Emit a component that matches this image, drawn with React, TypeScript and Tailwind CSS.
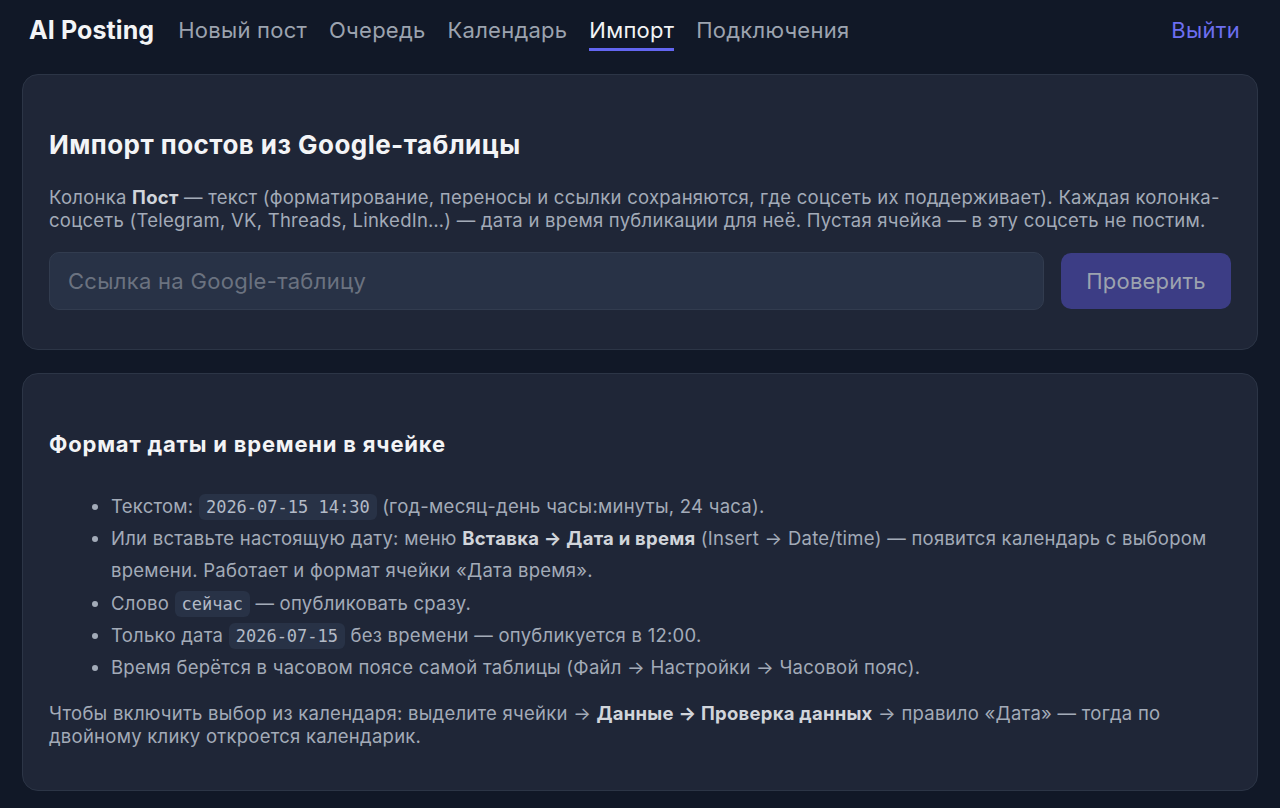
import React from "react";

const Code = ({ children }: { children: React.ReactNode }) => (
  <code className="rounded-md bg-[#283246] px-[7px] py-[3px] text-[17px] leading-[20px] tracking-normal text-[#b3bac6] [font-family:'DejaVu_Sans_Mono',monospace]">
    {children}
  </code>
);

export default function App() {
  const nav = ["Новый пост", "Очередь", "Календарь", "Импорт", "Подключения"];
  return (
    <div className="min-h-[808px] bg-[#111827] text-[#e5e7eb] [font-family:Inter,'Noto_Sans',sans-serif]">
      <header className="flex items-center justify-between pl-[29px] pr-[40px] pt-[16px]">
        <div className="flex items-start gap-[22px]">
          <div className="mr-[2px] text-[25px] font-bold leading-[28px] tracking-[0.1px] text-[#f3f4f6]">AI Posting</div>
          {nav.map((n) => (
            <div
              key={n}
              className={
                n === "Импорт"
                  ? "border-b-[3px] border-[#6366f1] pb-[4px] text-[22px] leading-[28px] tracking-[0.25px] text-[#f3f4f6]"
                  : "border-b-[3px] border-transparent pb-[4px] text-[22px] leading-[28px] tracking-[0.25px] text-[#9ca3af]"
              }
            >
              {n}
            </div>
          ))}
        </div>
        <div className="self-start text-[22px] leading-[28px] tracking-[0.3px] text-[#6d6ff0]">Выйти</div>
      </header>

      <main className="flex flex-col gap-[23px] px-[22px] pt-[23px] pb-[18px]">
        <section className="rounded-[16px] border border-[#2c3546] bg-[#1f2637] px-[26px] pt-[54px] pb-[39px]">
          <h2 className="text-[26px] font-bold leading-[32px] tracking-[0.45px] text-[#f3f4f6]">Импорт постов из Google-таблицы</h2>
          <p className="mt-[25px] text-[18.5px] leading-[23px] tracking-[0.25px] text-[#a3abb8]">
            Колонка <b className="font-bold text-[#d1d5db]">Пост</b> — текст (форматирование, переносы и ссылки сохраняются, где соцсеть их поддерживает). Каждая колонка-соцсеть (Telegram, VK, Threads, LinkedIn…) — дата и время публикации для неё. Пустая ячейка — в эту соцсеть не постим.
          </p>
          <div className="mt-[20px] flex items-center gap-[17px]">
            <div className="flex h-[58px] flex-1 items-center rounded-[10px] border border-[#323c4f] bg-[#283246] px-[18px] text-[22px] tracking-[0.3px] text-[#6b7280]">
              Ссылка на Google-таблицу
            </div>
            <button className="h-[56px] w-[170px] rounded-[10px] bg-[#3c3d85] text-[22px] tracking-[0.2px] text-[#9ca3af]">Проверить</button>
          </div>
        </section>

        <section className="rounded-[16px] border border-[#2c3546] bg-[#1f2637] px-[26px] pt-[56px] pb-[42px]">
          <h3 className="text-[22px] font-bold leading-[28px] tracking-[0.8px] text-[#f3f4f6]">Формат даты и времени в ячейке</h3>
          <ul className="mt-[32px] list-disc pl-[62px] text-[18.5px] leading-[32.2px] tracking-[0.25px] text-[#a3abb8] marker:text-[#a3abb8]">
            <li>
              Текстом: <Code>2026-07-15 14:30</Code> (год-месяц-день часы:минуты, 24 часа).
            </li>
            <li>
              Или вставьте настоящую дату: меню <b className="font-bold text-[#d1d5db]">Вставка → Дата и время</b> (Insert → Date/time) — появится календарь с выбором времени. Работает и формат ячейки «Дата время».
            </li>
            <li>
              Слово <Code>сейчас</Code> — опубликовать сразу.
            </li>
            <li>
              Только дата <Code>2026-07-15</Code> без времени — опубликуется в 12:00.
            </li>
            <li>Время берётся в часовом поясе самой таблицы (Файл → Настройки → Часовой пояс).</li>
          </ul>
          <p className="mt-[19px] text-[18.5px] leading-[23px] tracking-[0.25px] text-[#a3abb8]">
            Чтобы включить выбор из календаря: выделите ячейки → <b className="font-bold text-[#d1d5db]">Данные → Проверка данных</b> → правило «Дата» — тогда по двойному клику откроется календарик.
          </p>
        </section>
      </main>
    </div>
  );
}
